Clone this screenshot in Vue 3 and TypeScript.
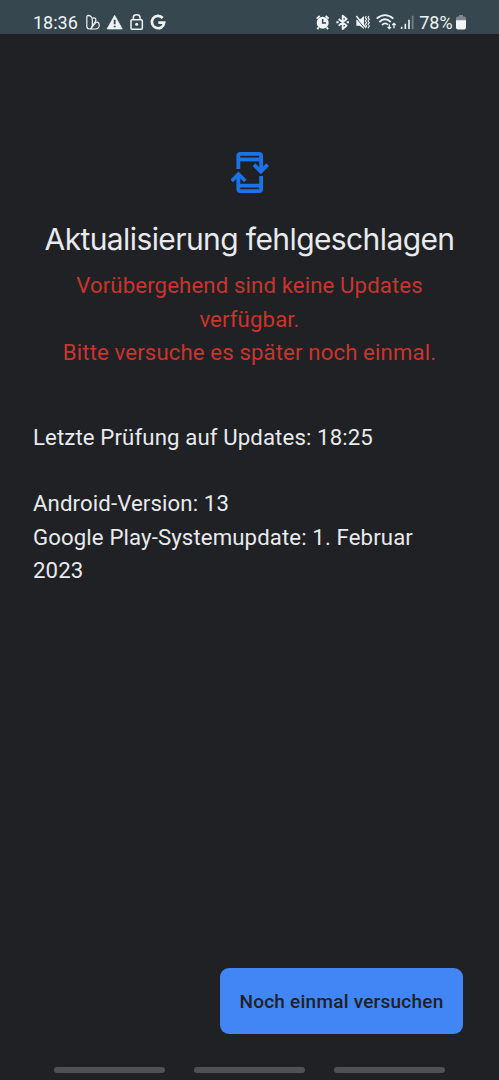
<script setup lang="ts">
const errorLines: string[] = ['Vorübergehend sind keine Updates', 'verfügbar.', 'Bitte versuche es später noch einmal.']
const infoLines: string[] = ['Android-Version: 13', 'Google Play-Systemupdate: 1. Februar', '2023']
</script>

<template>
  <div class="screen">
    <header class="status">
      <span class="clock">18:36</span>
      <svg class="left-icons" viewBox="252 36 252 60" fill="none" stroke="#eef3f5">
        <g stroke-width="3.6" stroke-linejoin="round">
          <path d="M260.500 50Q260.500 46 265 46Q277 48 277 60V76Q277 87 268.500 87Q260.500 87 260.500 79Z" />
          <path d="M277 55Q283 52 287 56Q289 60 286 65L276 81" />
          <path d="M274 83L287 68Q291 64 296 69Q299 74 297 80Q294 87 287 87H271" />
        </g>
        <path d="M344 46L367 87H321Z" fill="#eef3f5" stroke-linejoin="round" stroke-width="2" />
        <path d="M344 59V73M344 77V82" stroke="#37474f" stroke-width="5.5" />
        <rect x="393" y="59" width="34" height="29" rx="3" stroke-width="4.5" />
        <path d="M400 58V52Q400 44 410 44Q420 44 420 52V58" stroke-width="4.5" />
        <circle cx="410" cy="73" r="4.500" fill="#eef3f5" stroke="none" />
        <path d="M488 54A18.5 18.5 0 1 0 492.500 68H475" stroke-width="8" />
      </svg>
      <svg class="right-icons" viewBox="44 36 300 60" fill="none" stroke="#eef3f5">
        <circle cx="67" cy="68" r="18" fill="#eef3f5" stroke="none" />
        <path d="M49 56L58 48M76 48L85 56M55 82L51 88M79 82L83 88" stroke-width="5.500" />
        <path d="M67 57V69H77" stroke="#37474f" stroke-width="4.5" />
        <path d="M115 57L139 77L127 87V47L139 57L115 77" stroke-width="5.500" stroke-linejoin="round" />
        <path d="M108 67H115M139 67H146" stroke-width="6" />
        <path d="M168 59H178L191 48V87L178 77H168Z" fill="#eef3f5" stroke="none" />
        <path d="M167 53L194 86" stroke="#37474f" stroke-width="3" />
        <path d="M168 48L195 81" stroke-width="4.500" />
        <path d="M198 48L195 53L199 58L195 63L199 68L195 73L199 78L195 85M206 48L203 53L207 58L203 63L207 68L203 73L207 78L203 85" stroke-width="3.200" />
        <path d="M229 56Q254 35 279 56M237 66Q254 50 271 66M245 75Q254 66 263 74" stroke-width="5.500" />
        <path d="M267 73V86M262 81L267 86L272 81M281 85V70M276 75L281 70L286 75" stroke-width="4" />
        <path d="M304 80V87M315 71V87M326 59V87" stroke-width="4.8" />
        <path d="M337 47V87" stroke="#77848a" stroke-width="4.8" />
      </svg>
      <span class="percent">78%</span>
      <svg class="battery" viewBox="0 0 10 15">
        <path d="M3 0H7V1.5H8Q10 1.5 10 3.5V6H0V3.5Q0 1.5 2 1.5H3Z" fill="#7d8a8f" />
        <path d="M0 5.3H10V12.5Q10 14.5 8 14.5H2Q0 14.5 0 12.5Z" fill="#f3f6f7" />
      </svg>
    </header>

    <main class="content">
      <svg class="update-icon" viewBox="48 33 114 129" fill="none" stroke="#1a73e8" stroke-width="11.500">
        <path d="M70 87V47Q70 41.5 76 41.5H132Q138.500 41.500 138.500 48V94" />
        <path d="M70 58.500H138" />
        <path d="M117 74L137.500 94.500L158 74" />
        <path d="M138.500 108V147Q138.500 153.500 132 153.500H76Q70 153.500 70 147V104" />
        <path d="M70 137H138" />
        <path d="M50 123L70.500 102.500L91 123" />
      </svg>
      <h1 class="title">Aktualisierung fehlgeschlagen</h1>
      <p class="error"><span v-for="line in errorLines" :key="line">{{ line }}</span></p>
      <p class="info checked"><span>Letzte Prüfung auf Updates: 18:25</span></p>
      <p class="info"><span v-for="line in infoLines" :key="line">{{ line }}</span></p>
    </main>

    <footer class="actions">
      <button class="retry" type="button">Noch einmal versuchen</button>
    </footer>
    <nav class="gestures"><i v-for="n in 3" :key="n"></i></nav>
  </div>
</template>

<style>
body {
  margin: 0;
  background: #202124;
}
</style>

<style scoped>
.screen {
  display: flex;
  flex-direction: column;
  width: 499px;
  height: 1080px;
  overflow: hidden;
  background: #202124;
  color: #e8eaed;
  font-family: Roboto, sans-serif;
}
.status {
  display: flex;
  flex: none;
  box-sizing: border-box;
  height: 34px;
  padding: 12px 32px 0 33px;
  background: #37474f;
  color: #eef3f5;
}
.clock,
.percent {
  flex: none;
  height: 20px;
  font-size: 18px;
  line-height: 21px;
  white-space: nowrap;
}
.clock {
  width: 51px;
}
.left-icons {
  flex: none;
  width: 84px;
  height: 20px;
}
.right-icons {
  flex: none;
  width: 100px;
  height: 20px;
  margin-left: 146.700px;
}
.percent {
  width: 36.800px;
  margin-left: 4.500px;
}
.battery {
  flex: none;
  width: 10px;
  height: 15px;
  margin-top: 3px;
}
.content {
  display: flex;
  flex: 1;
  flex-direction: column;
  padding: 117px 33px 0;
}
.update-icon {
  width: 38px;
  height: 43px;
  margin-left: 198px;
}
.title {
  margin: 26px 0 0;
  font-family: Inter, sans-serif;
  font-size: 30px;
  font-weight: 400;
  line-height: 38px;
  letter-spacing: -0.600px;
  text-align: center;
  white-space: nowrap;
}
.error,
.info {
  display: flex;
  flex-direction: column;
  margin: 0;
  font-size: 22.200px;
  line-height: 33.200px;
  letter-spacing: 0.120px;
  white-space: nowrap;
}
.error {
  margin-top: 11.400px;
  color: #c9352d;
  text-align: center;
}
.checked {
  margin: 52px 0 33.200px;
}
.actions {
  display: flex;
  flex: none;
  justify-content: flex-end;
  padding: 0 36px 33px 0;
}
.retry {
  width: 243px;
  height: 66px;
  padding: 1px 0 0;
  border: 0;
  border-radius: 9px;
  background: #4285f4;
  color: #202124;
  font: 500 19px/65px Roboto, sans-serif;
  letter-spacing: 0.230px;
}
.gestures {
  display: flex;
  flex: none;
  justify-content: center;
  gap: 29px;
  height: 13px;
}
.gestures i {
  width: 111px;
  height: 6px;
  border-radius: 3px;
  background: #505153;
}
</style>
